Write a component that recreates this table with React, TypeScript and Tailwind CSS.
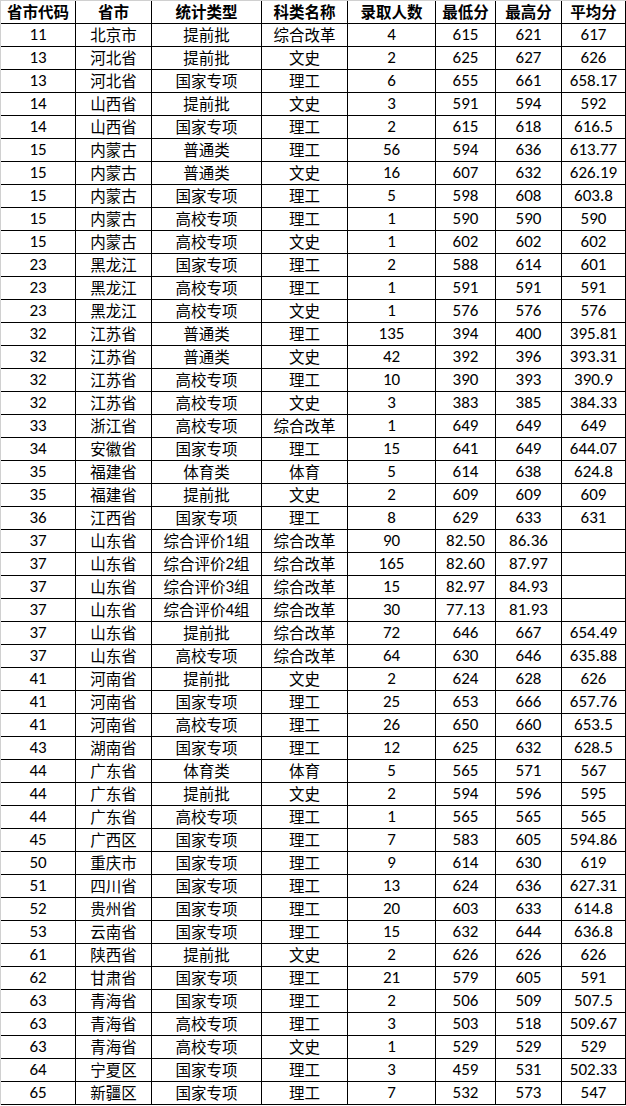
import React from "react";

type Row = [string, string, string, string, string, string, string, string];

const header: Row = ["省市代码", "省市", "统计类型", "科类名称", "录取人数", "最低分", "最高分", "平均分"];

const rows: Row[] = [
  ["11", "北京市", "提前批", "综合改革", "4", "615", "621", "617"],
  ["13", "河北省", "提前批", "文史", "2", "625", "627", "626"],
  ["13", "河北省", "国家专项", "理工", "6", "655", "661", "658.17"],
  ["14", "山西省", "提前批", "文史", "3", "591", "594", "592"],
  ["14", "山西省", "国家专项", "理工", "2", "615", "618", "616.5"],
  ["15", "内蒙古", "普通类", "理工", "56", "594", "636", "613.77"],
  ["15", "内蒙古", "普通类", "文史", "16", "607", "632", "626.19"],
  ["15", "内蒙古", "国家专项", "理工", "5", "598", "608", "603.8"],
  ["15", "内蒙古", "高校专项", "理工", "1", "590", "590", "590"],
  ["15", "内蒙古", "高校专项", "文史", "1", "602", "602", "602"],
  ["23", "黑龙江", "国家专项", "理工", "2", "588", "614", "601"],
  ["23", "黑龙江", "高校专项", "理工", "1", "591", "591", "591"],
  ["23", "黑龙江", "高校专项", "文史", "1", "576", "576", "576"],
  ["32", "江苏省", "普通类", "理工", "135", "394", "400", "395.81"],
  ["32", "江苏省", "普通类", "文史", "42", "392", "396", "393.31"],
  ["32", "江苏省", "高校专项", "理工", "10", "390", "393", "390.9"],
  ["32", "江苏省", "高校专项", "文史", "3", "383", "385", "384.33"],
  ["33", "浙江省", "高校专项", "综合改革", "1", "649", "649", "649"],
  ["34", "安徽省", "国家专项", "理工", "15", "641", "649", "644.07"],
  ["35", "福建省", "体育类", "体育", "5", "614", "638", "624.8"],
  ["35", "福建省", "提前批", "文史", "2", "609", "609", "609"],
  ["36", "江西省", "国家专项", "理工", "8", "629", "633", "631"],
  ["37", "山东省", "综合评价1组", "综合改革", "90", "82.50", "86.36", ""],
  ["37", "山东省", "综合评价2组", "综合改革", "165", "82.60", "87.97", ""],
  ["37", "山东省", "综合评价3组", "综合改革", "15", "82.97", "84.93", ""],
  ["37", "山东省", "综合评价4组", "综合改革", "30", "77.13", "81.93", ""],
  ["37", "山东省", "提前批", "综合改革", "72", "646", "667", "654.49"],
  ["37", "山东省", "高校专项", "综合改革", "64", "630", "646", "635.88"],
  ["41", "河南省", "提前批", "文史", "2", "624", "628", "626"],
  ["41", "河南省", "国家专项", "理工", "25", "653", "666", "657.76"],
  ["41", "河南省", "高校专项", "理工", "26", "650", "660", "653.5"],
  ["43", "湖南省", "国家专项", "理工", "12", "625", "632", "628.5"],
  ["44", "广东省", "体育类", "体育", "5", "565", "571", "567"],
  ["44", "广东省", "提前批", "文史", "2", "594", "596", "595"],
  ["44", "广东省", "高校专项", "理工", "1", "565", "565", "565"],
  ["45", "广西区", "国家专项", "理工", "7", "583", "605", "594.86"],
  ["50", "重庆市", "国家专项", "理工", "9", "614", "630", "619"],
  ["51", "四川省", "国家专项", "理工", "13", "624", "636", "627.31"],
  ["52", "贵州省", "国家专项", "理工", "20", "603", "633", "614.8"],
  ["53", "云南省", "国家专项", "理工", "15", "632", "644", "636.8"],
  ["61", "陕西省", "提前批", "文史", "2", "626", "626", "626"],
  ["62", "甘肃省", "国家专项", "理工", "21", "579", "605", "591"],
  ["63", "青海省", "国家专项", "理工", "2", "506", "509", "507.5"],
  ["63", "青海省", "高校专项", "理工", "3", "503", "518", "509.67"],
  ["63", "青海省", "高校专项", "文史", "1", "529", "529", "529"],
  ["64", "宁夏区", "国家专项", "理工", "3", "459", "531", "502.33"],
  ["65", "新疆区", "国家专项", "理工", "7", "532", "573", "547"],
];

// widths include each cell's right border
const cols = ["w-[75px]", "w-[76px]", "w-[110px]", "w-[86px]", "w-[88px]", "w-[60px]", "w-[66px]", "w-[64px]"];

// digits in the sheet come out larger than the CJK text
function Text({ value }: { value: string }) {
  const parts = value.split(/(\d[\d.]*)/).filter(Boolean);
  return (
    <>
      {parts.map((p, i) =>
        /^\d/.test(p) ? (
          <span key={i} className="text-[17px]">{p}</span>
        ) : (
          <span key={i}>{p}</span>
        )
      )}
    </>
  );
}

function TableRow({ cells, bold }: { cells: Row; bold?: boolean }) {
  return (
    <div className="flex h-[23px] border-b border-black">
      {cells.map((c, i) => (
        <div
          key={i}
          className={`${cols[i]} shrink-0 flex items-end justify-center pb-[3px] border-r border-black leading-none whitespace-nowrap ${bold ? "font-bold" : ""}`}
        >
          <Text value={c} />
        </div>
      ))}
    </div>
  );
}

export default function App() {
  return (
    <div
      className="w-[626px] bg-white text-black text-[15.5px] border-l border-t border-[#d0d0d0]"
      style={{ fontFamily: 'Calibri, Carlito, Lato, "Noto Sans CJK SC", sans-serif' }}
    >
      <TableRow cells={header} bold />
      {rows.map((r, i) => (
        <TableRow key={i} cells={r} />
      ))}
    </div>
  );
}
